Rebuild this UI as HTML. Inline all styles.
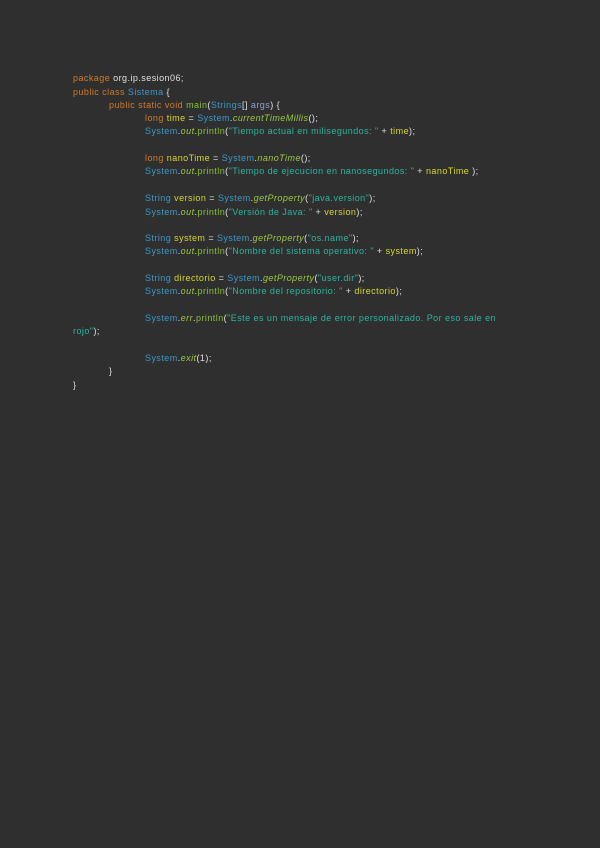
<!DOCTYPE html><html><head><style>
body{margin:0;width:600px;height:848px;background:#2f2f2f;font-family:"Liberation Sans",sans-serif;font-size:9px;letter-spacing:0.45px;color:#e0e0e0;position:relative;overflow:hidden}
.l{position:absolute;white-space:pre;line-height:12px}
.k{color:#d07a2a}.c{color:#3a98c8}.s{color:#2ab5a0}.m{color:#86c232}.i{font-style:italic;color:#9ac840}.v{color:#d9d62a}.p{color:#8aa0d8}
</style></head><body>
<div class="l" style="left:73px;top:72px"><span class="k">package</span> org.ip.sesion06;</div>
<div class="l" style="left:73px;top:86px"><span class="k">public class</span> <span class="c">Sistema</span> {</div>
<div class="l" style="left:109px;top:99px"><span class="k">public static void</span> <span class="m">main</span>(<span class="c">Strings</span>[] <span class="p">args</span>) {</div>
<div class="l" style="left:145px;top:112px"><span class="k">long</span> <span class="v">time</span> = <span class="c">System</span>.<span class="i">currentTimeMillis</span>();</div>
<div class="l" style="left:145px;top:125px"><span class="c">System</span>.<span class="i">out</span>.<span class="m">println</span>(<span class="s">"Tiempo actual en milisegundos: "</span> + <span class="v">time</span>);</div>
<div class="l" style="left:145px;top:152px"><span class="k">long</span> <span class="v">nanoTime</span> = <span class="c">System</span>.<span class="i">nanoTime</span>();</div>
<div class="l" style="left:145px;top:165px"><span class="c">System</span>.<span class="i">out</span>.<span class="m">println</span>(<span class="s">"Tiempo de ejecucion en nanosegundos: "</span> + <span class="v">nanoTime</span> );</div>
<div class="l" style="left:145px;top:192px"><span class="c">String</span> <span class="v">version</span> = <span class="c">System</span>.<span class="i">getProperty</span>(<span class="s">"java.version"</span>);</div>
<div class="l" style="left:145px;top:206px"><span class="c">System</span>.<span class="i">out</span>.<span class="m">println</span>(<span class="s">"Versión de Java: "</span> + <span class="v">version</span>);</div>
<div class="l" style="left:145px;top:232px"><span class="c">String</span> <span class="v">system</span> = <span class="c">System</span>.<span class="i">getProperty</span>(<span class="s">"os.name"</span>);</div>
<div class="l" style="left:145px;top:245px"><span class="c">System</span>.<span class="i">out</span>.<span class="m">println</span>(<span class="s">"Nombre del sistema operativo: "</span> + <span class="v">system</span>);</div>
<div class="l" style="left:145px;top:272px"><span class="c">String</span> <span class="v">directorio</span> = <span class="c">System</span>.<span class="i">getProperty</span>(<span class="s">"user.dir"</span>);</div>
<div class="l" style="left:145px;top:285px"><span class="c">System</span>.<span class="i">out</span>.<span class="m">println</span>(<span class="s">"Nombre del repositorio: "</span> + <span class="v">directorio</span>);</div>
<div class="l" style="left:145px;top:312px"><span class="c">System</span>.<span class="i">err</span>.<span class="m">println</span>(<span class="s">"Este es un mensaje de error personalizado. Por eso sale en</span></div>
<div class="l" style="left:73px;top:325px"><span class="s">rojo"</span>);</div>
<div class="l" style="left:145px;top:352px"><span class="c">System</span>.<span class="i">exit</span>(1);</div>
<div class="l" style="left:109px;top:365px">}</div>
<div class="l" style="left:73px;top:379px">}</div>
</body></html>
